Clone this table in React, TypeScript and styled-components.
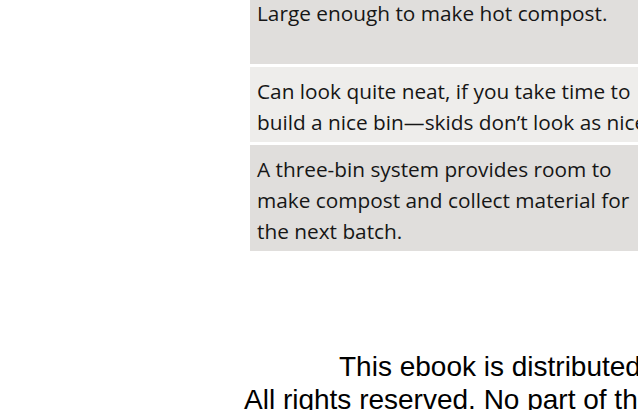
import React from "react";
import styled, { createGlobalStyle } from "styled-components";

const GlobalStyle = createGlobalStyle`
  html, body {
    margin: 0;
    padding: 0;
    background: #ffffff;
    overflow: hidden;
  }
  body {
    width: 638px;
    height: 410px;
  }
`;

const Page = styled.div`
  display: flex;
  flex-direction: column;
  width: 638px;
  height: 410px;
  overflow: hidden;
`;

const Table = styled.div`
  display: flex;
  flex-direction: column;
  gap: 3px;
  margin-top: -11px;
  margin-left: 250px;
  width: 420px;
  flex-shrink: 0;
`;

const Cell = styled.div<{ $tone: "dark" | "light"; $lines?: number }>`
  box-sizing: border-box;
  background: ${(p) => (p.$tone === "dark" ? "#e0dedc" : "#eeedeb")};
  padding: 9px 7px 4px 7px;
  min-height: ${(p) => (p.$lines ? 13 + p.$lines * 31 : 0)}px;
  font-family: "Open Sans", "Noto Sans", sans-serif;
  font-size: 20.8px;
  line-height: 31px;
  color: #161616;
`;

const Footer = styled.div`
  display: flex;
  flex-direction: column;
  margin-top: 99px;
  font-family: "Liberation Sans", Arial, sans-serif;
  font-size: 28px;
  line-height: 33px;
  color: #000000;
  white-space: nowrap;
`;

const FooterLine = styled.div<{ $indent: number }>`
  padding-left: ${(p) => p.$indent}px;
`;

export default function App() {
  return (
    <>
      <GlobalStyle />
      <Page>
        <Table>
          <Cell $tone="dark" $lines={2}>Large enough to make hot compost.</Cell>
          <Cell $tone="light">
            Can look quite neat, if you take time to build a nice bin—skids don’t look as nice.
          </Cell>
          <Cell $tone="dark">
            A three-bin system provides room to make compost and collect material for the next batch.
          </Cell>
        </Table>
        <Footer>
          <FooterLine $indent={339}>This ebook is distributed under license.</FooterLine>
          <FooterLine $indent={244}>All rights reserved. No part of this book may be reproduced.</FooterLine>
        </Footer>
      </Page>
    </>
  );
}
